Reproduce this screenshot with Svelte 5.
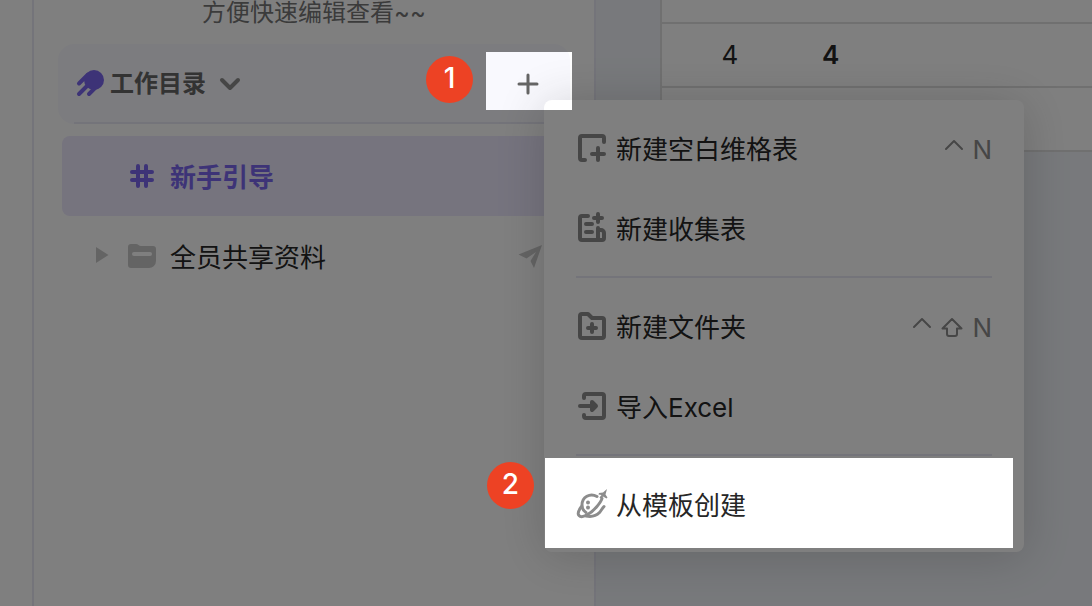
<script>
  const rows = ['3', '4', ''];

  const groups = [
    [
      { icon: 'sheet', label: '新建空白维格表', keys: ['ctrl', 'N'] },
      { icon: 'form', label: '新建收集表', keys: [] }
    ],
    [
      { icon: 'folder', label: '新建文件夹', keys: ['ctrl', 'shift', 'N'] },
      { icon: 'import', label: '导入Excel', keys: [] }
    ],
    [{ icon: 'planet', label: '从模板创建', keys: [] }]
  ];

  const paths = {
    sheet: 'M28 10V6a2 2 0 0 0-2-2H6a2 2 0 0 0-2 2v20a2 2 0 0 0 2 2h3M22 16v12M16 22h12',
    form: 'M12 4H6a2 2 0 0 0-2 2v20a2 2 0 0 0 2 2h20a2 2 0 0 0 2-2v-5a3 3 0 0 0-3-3h-3M22 16v12M10 12h6M10 20h6M22 2v8M18 6h8',
    folder: 'M4 26V6a2 2 0 0 1 2-2h6l4 4h10a2 2 0 0 1 2 2v16a2 2 0 0 1-2 2H6a2 2 0 0 1-2-2zM16 14v8M12 18h8',
    import: 'M8 8V6a2 2 0 0 1 2-2h16a2 2 0 0 1 2 2v20a2 2 0 0 1-2 2H10a2 2 0 0 1-2-2v-1M4 16h16M16 12l4 4-4 4z'
  };
</script>

<div class="page">
  <nav class="rail" aria-label="主导航"></nav>

  <aside class="sidebar">
    <p class="hint">方便快速编辑查看~~</p>

    <header class="catalog">
      <svg class="icon brand" viewBox="0 0 32 32" aria-hidden="true">
        <circle cx="20" cy="12" r="10" />
        <path class="tail" d="M5 15.500L14 6.500M5 26l11-11M15 26l9-9" />
      </svg>
      <h1>工作目录</h1>
      <svg class="icon chevron" viewBox="0 0 32 32" aria-hidden="true"><path d="M8 12l8 8 8-8" /></svg>
      <button class="add" aria-label="新建">
        <svg class="icon" viewBox="0 0 32 32" aria-hidden="true"><path d="M16 7v18M7 16h18" /></svg>
      </button>
    </header>
    <hr class="rule" />

    <ul class="tree">
      <li class="node active">
        <span class="icon"></span>
        <svg class="icon hash" viewBox="0 0 32 32" aria-hidden="true">
          <path d="M12 6v20M20 6v20M6 12h20M6 20h20" />
        </svg>
        <a class="label" href="#guide">新手引导</a>
      </li>
      <li class="node">
        <svg class="icon muted" viewBox="0 0 32 32" aria-hidden="true"><path d="M10 7v16l12.500-8z" /></svg>
        <svg class="icon muted" viewBox="0 0 32 32" aria-hidden="true">
          <path d="M2 7a3 3 0 0 1 3-3h5c2 0 3 2 5 2h12a3 3 0 0 1 3 3v12a7 7 0 0 1-7 7H5a3 3 0 0 1-3-3z" />
          <path class="slot" d="M8 14h16" />
        </svg>
        <a class="label" href="#shared">全员共享资料</a>
        <svg class="icon muted send" viewBox="0 0 32 32" aria-hidden="true">
          <path d="M2.500 14.500L26 5l-8 23-3.500-7L20 12l-9.500 6.500z" />
        </svg>
      </li>
    </ul>
  </aside>

  <main class="content">
    <table>
      <tbody>
        {#each rows as value}
          <tr>
            <td class="index">{value}</td>
            <td class="title">{value}</td>
          </tr>
        {/each}
      </tbody>
    </table>
  </main>

  <div class="menu" role="menu">
    {#each groups as group, i}
      {#if i > 0}<hr />{/if}
      {#each group as item}
        <button class="item" role="menuitem">
          {#if item.icon === 'planet'}
            <svg class="icon planet" viewBox="0 0 32 32" aria-hidden="true">
              <path d="M21 8.500C14 4.500 6 9 6 17c0 3.500 1.500 6 4 7.500" />
              <path d="M5.500 18.500c-3 4-4 7.500-2.500 9 3 3.500 12-2 17.500-8.500 3-3.500 5-6.500 5.500-8.500" />
              <path d="M28 18.500c-1.500 1.500-2.500 3.500-4.500 6-3 3-8.500 4.500-13.500 3.500" />
              <path class="solid" d="M31 1l-1.500 5.500 2 3-1 1-3.500-2-2 2.500-1.500-1.500 2-2.500-3-.5.500-1.500 4-.5z" />
              <circle class="solid" cx="12" cy="14.500" r="2" />
              <circle class="solid" cx="12" cy="19.500" r="2" />
            </svg>
          {:else}
            <svg class="icon line" viewBox="0 0 32 32" aria-hidden="true"><path d={paths[item.icon]} /></svg>
          {/if}
          <span class="label">{item.label}</span>
          {#if item.keys.length}
            <span class="keys label">
              {#each item.keys as key}
                {#if key === 'ctrl'}
                  <svg class="key" viewBox="0 0 20 26" role="img" aria-label="Control"><path d="M2 12l8-8 8 8" /></svg>
                {:else if key === 'shift'}
                  <svg class="key wide" viewBox="-1 0 24 26" role="img" aria-label="Shift">
                    <path d="M11 4L1.500 13.500H6V19a2 2 0 0 0 2 2h6a2 2 0 0 0 2-2v-5.500h4.500z" />
                  </svg>
                {:else}
                  <kbd>{key}</kbd>
                {/if}
              {/each}
            </span>
          {/if}
        </button>
      {/each}
    {/each}
  </div>

  <svg class="dim" aria-hidden="true">
    <mask id="holes">
      <rect width="100%" height="100%" fill="#fff" />
      <rect x="486" y="52" width="86" height="58" fill="#000" />
      <rect x="545" y="458" width="468" height="90" fill="#000" />
    </mask>
    <rect width="100%" height="100%" fill="#000" fill-opacity="0.5" mask="url(#holes)" />
  </svg>

  <span class="step first">1</span>
  <span class="step second">2</span>
</div>

<style>
  .page {
    position: relative;
    display: flex;
    min-height: 100vh;
    overflow: hidden;
    background: #fff;
    color: #262626;
    font: 26px/32px Inter, 'Noto Sans CJK SC', sans-serif;
  }

  h1, p, ul { margin: 0; padding: 0; }
  hr { height: 2px; margin: 0; border: 0; background: #e8e8f4; }
  button { padding: 0; border: 0; background: none; color: inherit; font: inherit; }
  a { color: inherit; text-decoration: none; }

  .icon {
    flex: none;
    display: block;
    width: 32px;
    height: 32px;
    fill: none;
    stroke-linecap: round;
    stroke-linejoin: round;
  }
  .label { padding-top: 3px; }

  .rail { width: 32px; flex: none; border-right: 2px solid #e8e8f4; }

  .sidebar {
    box-sizing: border-box;
    flex: none;
    width: 562px;
    padding: 0 24px;
    border-right: 2px solid #e8e8f4;
  }
  .hint { color: #777; font-size: 24px; line-height: 26px; text-align: center; }

  .catalog {
    display: flex;
    align-items: center;
    height: 80px;
    margin-top: 18px;
    padding: 0 26px 0 16px;
    border-radius: 16px;
    background: #f9f9fe;
  }
  .catalog h1 { margin: 0 8px 0 4px; color: #666; font-size: 24px; font-weight: 600; }
  .brand { fill: #7b67ee; }
  .tail { stroke: #7b67ee; stroke-width: 4; }
  .chevron { stroke: #8c8c8c; stroke-width: 4; }
  .add { margin-left: auto; }
  .add .icon { stroke: #666; stroke-width: 3; }
  .rule { margin: -2px 16px 12px; }

  .tree { margin: 0 4px; list-style: none; }
  .node { display: flex; align-items: center; height: 80px; padding: 0 18px 0 24px; border-radius: 8px; }
  .node > :nth-child(2) { margin: 0 12px 0 8px; }
  .active { background: #ece8fd; color: #7b67ee; font-weight: 600; }
  .hash { stroke: #7b67ee; stroke-width: 4; }
  .muted { fill: #c9c9c9; }
  .slot { stroke: #fff; stroke-width: 4; }
  .send { margin-left: auto; }

  .content { flex: 1; min-width: 0; padding-left: 64px; background: #f0f3f8; }
  table {
    width: 100%;
    margin-top: -40px;
    border-collapse: separate;
    border-spacing: 0;
    border-left: 2px solid #e0e0e0;
    background: #fff;
  }
  td { height: 62px; padding: 0; border-bottom: 2px solid #e0e0e0; }
  .index { width: 136px; text-align: center; }
  .title { padding-left: 24px; font-weight: 600; }

  .menu {
    position: absolute;
    top: 100px;
    left: 544px;
    box-sizing: border-box;
    width: 480px;
    padding: 8px 0;
    border-radius: 8px;
    background: #fff;
    box-shadow: 0 4px 48px rgba(38, 38, 38, 0.2);
  }
  .menu hr { margin: 8px 32px; }
  .item {
    display: flex;
    align-items: center;
    gap: 8px;
    width: 100%;
    height: 80px;
    padding: 0 32px;
    text-align: left;
  }
  .line { stroke: #8c8c8c; stroke-width: 4; }
  .planet { stroke: #8c8c8c; stroke-width: 3; }
  .solid { fill: #8c8c8c; stroke: none; }
  .keys { display: flex; align-items: center; gap: 8px; margin-left: auto; color: #8c8c8c; }
  .key { width: 20px; height: 26px; fill: none; stroke: #8c8c8c; stroke-width: 2; stroke-linecap: round; stroke-linejoin: round; }
  .wide { width: 24px; }
  kbd { font-family: inherit; }

  .dim { position: absolute; top: 0; left: 0; width: 100%; height: 100%; pointer-events: none; }

  .step {
    position: absolute;
    width: 47px;
    height: 47px;
    border-radius: 50%;
    background: #ed4224;
    color: #fff;
    font-size: 28px;
    font-weight: 500;
    line-height: 44px;
    text-align: center;
  }
  .first { top: 56px; left: 426px; }
  .second { top: 462px; left: 487px; }
</style>
